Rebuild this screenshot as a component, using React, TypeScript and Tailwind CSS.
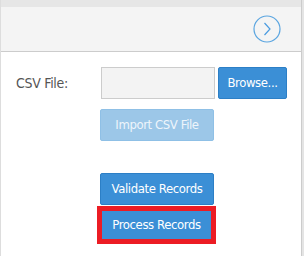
const font = "font-['DejaVu_Sans_Condensed','DejaVu_Sans',sans-serif]";
const btnText = "text-[13px] tracking-[-0.4px]";

const App = () => {
  return (
    <div className={`w-[304px] h-[256px] bg-white flex ${font}`}>
      <div className="flex-1 flex flex-col border-l border-[#dddddd]">
        <div className="h-[7px] bg-[#e6e6e6]" />
        <div className="h-[45px] bg-[#f4f4f4] border-b border-[#cccccc] flex items-center justify-end pr-[20px]">
          <svg width="28" height="28" viewBox="0 0 28 28" fill="none">
            <circle cx="14" cy="14" r="13" stroke="#5aa5e0" strokeWidth="1.2" />
            <path d="M11.5 8 L17 14 L11.5 20" stroke="#4a9be0" strokeWidth="1.2" />
          </svg>
        </div>
        <div className="flex-1 pt-[15px]">
          <div className="flex items-center">
            <span className="w-[100px] pl-[15px] text-[14px] tracking-[-0.3px] text-[#555555]">CSV File:</span>
            <div className="w-[114px] h-[32px] bg-[#f3f3f3] border border-[#cccccc]" />
            <button className={`ml-[3px] w-[69px] h-[32px] rounded-[2px] bg-[#3b8fd6] border border-[#2c7fc6] text-white ${btnText}`}>
              Browse...
            </button>
          </div>
          <div className="pl-[99px] mt-[10px]">
            <button className={`w-[114px] h-[32px] rounded-[2px] bg-[#9cc7e8] border border-[#8fc0e6] text-[#eef5fb] ${btnText}`}>
              Import CSV File
            </button>
          </div>
          <div className="pl-[99px] mt-[32px] flex flex-col">
            <button className={`w-[114px] h-[32px] rounded-[2px] bg-[#3b8fd6] border border-[#2c7fc6] text-white ${btnText}`}>
              Validate Records
            </button>
            <div className="-ml-[3px] mt-[1px] w-[119px] border-[5px] border-[#ec1c24]">
              <button className={`w-full h-[28px] bg-[#3b8fd6] text-white ${btnText}`}>
                Process Records
              </button>
            </div>
          </div>
        </div>
      </div>
      <div className="w-[3px] border-l border-[#cccccc] bg-[#e4e4e4]" />
    </div>
  );
};

export default App;
